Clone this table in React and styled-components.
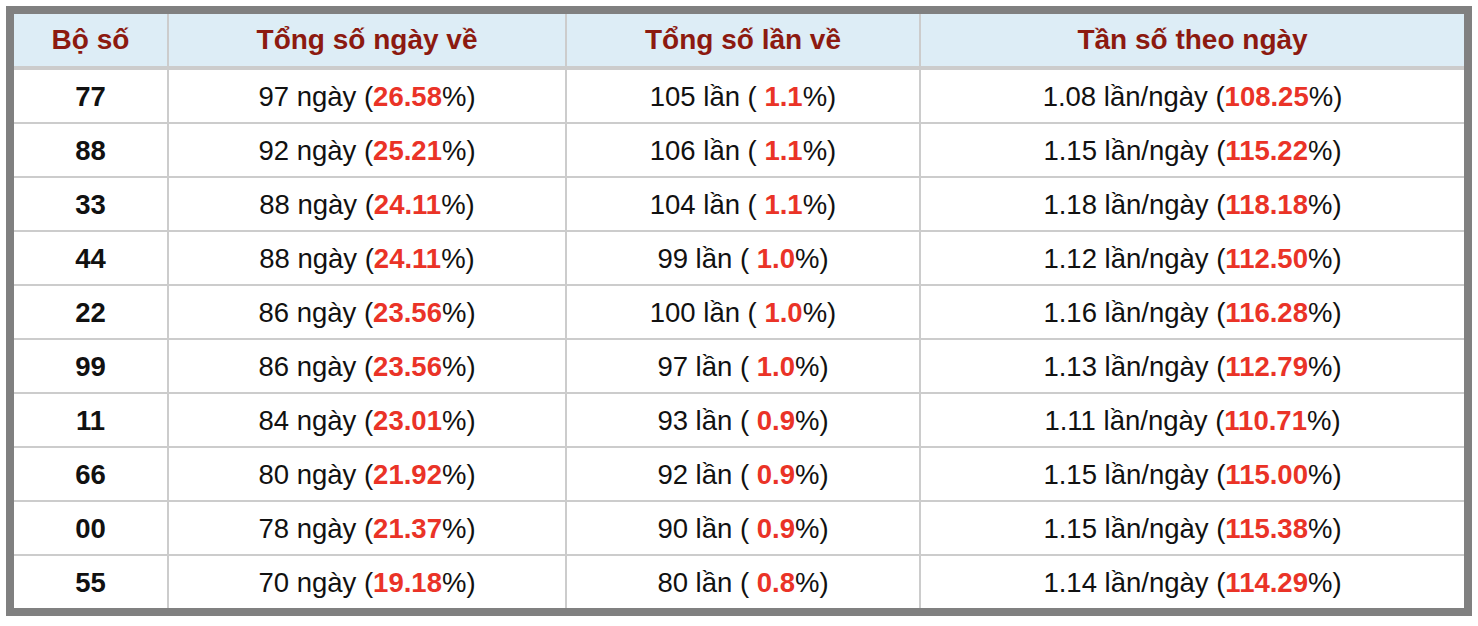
import styled, { createGlobalStyle } from 'styled-components'

const rows = [
  ['77', '97', '26.58', '105', '1.1', '1.08', '108.25'],
  ['88', '92', '25.21', '106', '1.1', '1.15', '115.22'],
  ['33', '88', '24.11', '104', '1.1', '1.18', '118.18'],
  ['44', '88', '24.11', '99', '1.0', '1.12', '112.50'],
  ['22', '86', '23.56', '100', '1.0', '1.16', '116.28'],
  ['99', '86', '23.56', '97', '1.0', '1.13', '112.79'],
  ['11', '84', '23.01', '93', '0.9', '1.11', '110.71'],
  ['66', '80', '21.92', '92', '0.9', '1.15', '115.00'],
  ['00', '78', '21.37', '90', '0.9', '1.15', '115.38'],
  ['55', '70', '19.18', '80', '0.8', '1.14', '114.29'],
]

export default function App() {
  return (
    <>
      <GlobalStyle />
      <Page>
        <Table>
          <colgroup>
            <Col width={158} />
            <Col width={398} />
            <Col width={354} />
            <Col />
          </colgroup>
          <thead>
            <tr>
              <Head>Bộ số</Head>
              <Head>Tổng số ngày về</Head>
              <Head>Tổng số lần về</Head>
              <Head>Tần số theo ngày</Head>
            </tr>
          </thead>
          <tbody>
            {rows.map(r => (
              <tr key={r[0]}>
                <Cell bold>{r[0]}</Cell>
                <Cell>
                  {r[1]} ngày (<Red>{r[2]}</Red>%)
                </Cell>
                <Cell>
                  {r[3]} lần ( <Red>{r[4]}</Red>%)
                </Cell>
                <Cell>
                  {r[5]} lần/ngày (<Red>{r[6]}</Red>%)
                </Cell>
              </tr>
            ))}
          </tbody>
        </Table>
      </Page>
    </>
  )
}

const GlobalStyle = createGlobalStyle`
  body {
    margin: 0;
    background: #fff;
    font-family: "Liberation Sans", Arial, sans-serif;
  }
`

const Page = styled.div`
  padding: 6px;
`

const Table = styled.table`
  width: 1466px;
  border-collapse: collapse;
  border: 8px solid #808080;
  table-layout: fixed;
`

const Col = styled.col`
  width: ${props => (props.width ? `${props.width}px` : 'auto')};
`

const Head = styled.th`
  height: 52px;
  padding: 0;
  background: #ddedf6;
  color: #8c1a10;
  font-size: 28px;
  font-weight: bold;
  text-align: center;
  border-left: 2px solid #cccccc;
  border-bottom: 4px solid #cccccc;
`

const Cell = styled.td`
  height: 50px;
  padding: 2px 0 0;
  font-size: 27.5px;
  color: #111;
  text-align: center;
  font-weight: ${props => (props.bold ? 'bold' : 'normal')};
  border-left: 2px solid #cccccc;
  border-top: 2px solid #cccccc;
`

const Red = styled.b`
  color: #ea3327;
`
